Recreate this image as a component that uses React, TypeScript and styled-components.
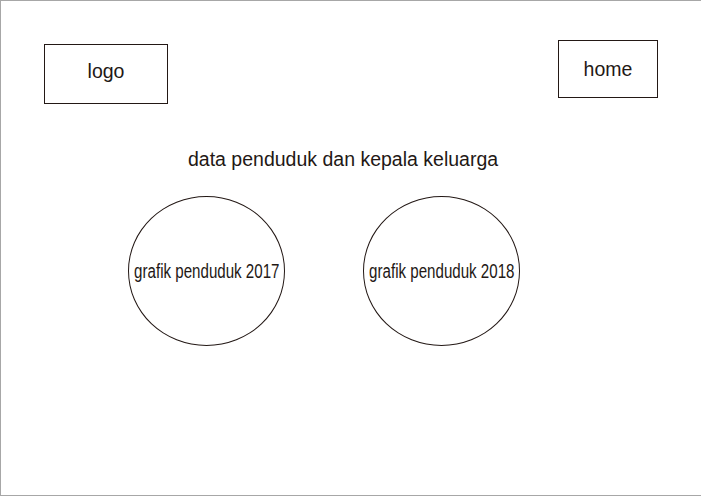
import styled, { createGlobalStyle } from "styled-components";

const GlobalStyle = createGlobalStyle`
  html, body {
    margin: 0;
    padding: 0;
    background: #ffffff;
  }
  body {
    font-family: "Liberation Sans", Arial, sans-serif;
    color: #231815;
  }
`;

const Frame = styled.div`
  box-sizing: border-box;
  width: 701px;
  height: 496px;
  border-top: 1px solid #a7a7a7;
  border-left: 1px solid #a7a7a7;
  border-bottom: 1px solid #a7a7a7;
  display: flex;
  flex-direction: column;
`;

const Header = styled.header`
  display: flex;
  justify-content: space-between;
  align-items: flex-start;
  padding: 39px 43px 0 43px;
`;

const Box = styled.div<{ $w: number; $h: number; $top?: number; $lift?: number }>`
  box-sizing: border-box;
  width: ${(p) => p.$w}px;
  height: ${(p) => p.$h}px;
  margin-top: ${(p) => p.$top ?? 0}px;
  padding-bottom: ${(p) => p.$lift ?? 0}px;
  border: 1px solid #231815;
  display: flex;
  align-items: center;
  justify-content: center;
  font-size: 19.5px;
  line-height: 22px;
`;

const Title = styled.h1`
  margin: 43px 0 0 187px;
  font-weight: normal;
  font-size: 19.5px;
  line-height: 24px;
  white-space: nowrap;
`;

const Charts = styled.div`
  display: flex;
  gap: 78px;
  padding-left: 127px;
  margin-top: 25px;
`;

const Circle = styled.div`
  box-sizing: border-box;
  width: 157px;
  height: 150px;
  border: 1px solid #231815;
  border-radius: 50%;
  display: flex;
  align-items: center;
  justify-content: center;
`;

// condensed face is not installed, so squeeze the regular one
const CircleLabel = styled.span`
  display: inline-block;
  font-size: 19.5px;
  line-height: 22px;
  white-space: nowrap;
  transform: scaleX(0.775);
`;

const years = [2017, 2018];

export default function App() {
  return (
    <>
      <GlobalStyle />
      <Frame>
        <Header>
          <Box $w={124} $h={60} $top={4} $lift={6}>
            logo
          </Box>
          <Box $w={100} $h={58}>
            home
          </Box>
        </Header>
        <Title>data penduduk dan kepala keluarga</Title>
        <Charts>
          {years.map((y) => (
            <Circle key={y}>
              <CircleLabel>grafik penduduk {y}</CircleLabel>
            </Circle>
          ))}
        </Charts>
      </Frame>
    </>
  );
}
